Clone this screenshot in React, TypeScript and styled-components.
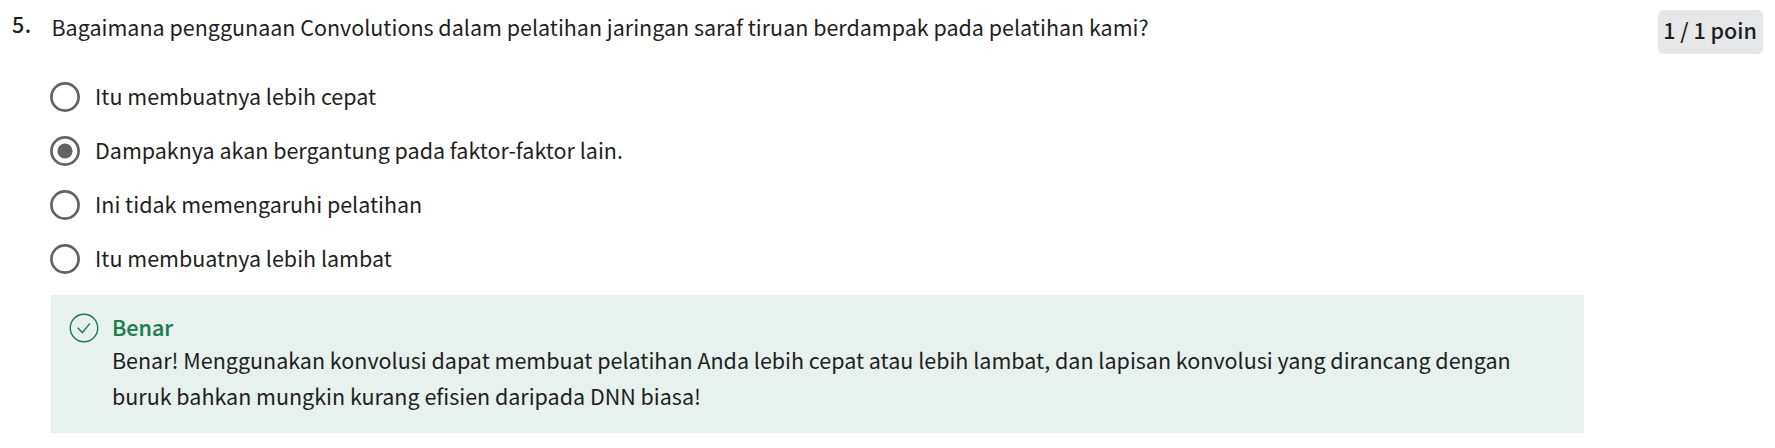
import React from "react";
import styled, { createGlobalStyle } from "styled-components";

const Global = createGlobalStyle`
  * { box-sizing: border-box; }
  body {
    margin: 0;
    background: #fff;
    color: #1f1f1f;
    font-family: "Noto Sans CJK SC", "Noto Sans", sans-serif;
    font-size: 21.49px;
  }
`;

const Page = styled.main`
  display: flex;
  align-items: flex-start;
  height: 448px;
  padding: 10px 12px 0;
`;

const QuestionNumber = styled.div`
  width: 39px;
  margin-top: -2px;
  font-weight: 500;
  line-height: 32px;
  letter-spacing: 0.4px;
`;

const Body = styled.div`
  flex: 1;
`;

const Question = styled.p`
  margin: 1px 0 0 0.5px;
  line-height: 32px;
`;

const Options = styled.ul`
  list-style: none;
  margin: 27px 0 0 -1.5px;
  padding: 0;
`;

const Option = styled.li`
  display: flex;
  align-items: center;
  gap: 15.5px;
  height: 54px;
`;

const OptionLabel = styled.span`
  line-height: 32px;
  padding-bottom: 2px;
`;

const RadioIcon = styled.svg`
  flex: none;
  width: 30px;
  height: 30px;
  overflow: visible;
`;

const Points = styled.div`
  width: 105px;
  height: 44px;
  padding-right: 1px;
  border-radius: 6px;
  background: #e5e7e8;
  font-weight: 500;
  line-height: 40px;
  text-align: center;
  white-space: nowrap;
`;

const Feedback = styled.section`
  display: flex;
  gap: 12px;
  width: 1533px;
  height: 138px;
  margin-top: 9px;
  padding: 16px 18px;
  background: #e7f1ed;
`;

const CheckIcon = styled.svg`
  flex: none;
  width: 31px;
  height: 31px;
  margin-top: 1px;
  fill: none;
  stroke: #1d7c50;
  stroke-width: 1.4;
`;

const FeedbackTitle = styled.div`
  color: #1d7c50;
  font-weight: 500;
  line-height: 32px;
  -webkit-text-stroke: 0.2px currentColor;
`;

const FeedbackText = styled.p`
  margin: -1px 0 0;
  line-height: 36px;
  white-space: nowrap;
`;

const options = [
  { label: "Itu membuatnya lebih cepat", checked: false },
  { label: "Dampaknya akan bergantung pada faktor-faktor lain.", checked: true },
  { label: "Ini tidak memengaruhi pelatihan", checked: false },
  { label: "Itu membuatnya lebih lambat", checked: false },
];

function Radio({ checked }: { checked: boolean }) {
  return (
    <RadioIcon viewBox="0 0 30 30">
      <circle cx="15" cy="15" r="13.6" fill="none" stroke="#636363" strokeWidth="2.7" />
      {checked && <circle cx="15" cy="15" r="7.6" fill="#636363" />}
    </RadioIcon>
  );
}

export default function App() {
  return (
    <Page>
      <Global />
      <QuestionNumber>5.</QuestionNumber>
      <Body>
        <Question>
          Bagaimana penggunaan Convolutions dalam pelatihan jaringan saraf tiruan berdampak pada pelatihan kami?
        </Question>
        <Options>
          {options.map(({ label, checked }) => (
            <Option key={label}>
              <Radio checked={checked} />
              <OptionLabel>{label}</OptionLabel>
            </Option>
          ))}
        </Options>
        <Feedback>
          <CheckIcon viewBox="0 0 31 31">
            <circle cx="15" cy="16" r="13.7" />
            <path d="M8.7 15.8l4.7 4.8 7.5-9.2" />
          </CheckIcon>
          <div>
            <FeedbackTitle>Benar</FeedbackTitle>
            <FeedbackText>
              Benar! Menggunakan konvolusi dapat membuat pelatihan Anda lebih cepat atau lebih lambat, dan lapisan konvolusi yang dirancang dengan
              <br />
              buruk bahkan mungkin kurang efisien daripada DNN biasa!
            </FeedbackText>
          </div>
        </Feedback>
      </Body>
      <Points>1 / 1 poin</Points>
    </Page>
  );
}
